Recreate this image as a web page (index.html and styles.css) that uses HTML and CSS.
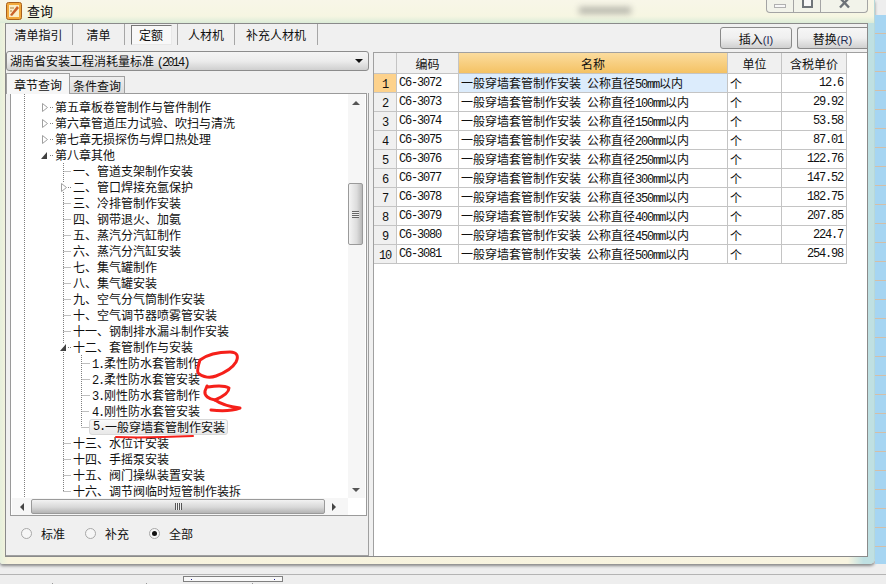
FILE: index.html
```html
<!DOCTYPE html>
<html lang="zh-CN">
<head>
    <meta charset="UTF-8">
    <title>查询</title>
    <link rel="stylesheet" href="styles.css">
</head>
<body>
    <div class="stage">
        <div class="top-area">
            <div class="window">
                <div class="titlebar">
                    <svg class="app-icon" width="16" height="18" viewBox="0 0 16 18">
                        <rect x="0.5" y="0.5" width="15" height="17" rx="2" fill="#f2a93b" stroke="#a8601c"/>
                        <rect x="3" y="3" width="10" height="12" fill="#fbeec8"/>
                        <path d="M4 13 L11 4 L13 6 L6 14 Z" fill="#c9602a"/>
                        <path d="M4 6 H8 M4 9 H6" stroke="#b08040"/>
                    </svg>
                    <span class="title-text">查询</span>
                    <div class="title-blur"></div>
                    <div class="win-controls">
                        <div class="win-btn min-btn"><span class="min-glyph"></span></div>
                        <div class="win-btn max-btn"><span class="max-glyph"></span></div>
                        <div class="win-btn close-btn">
                            <svg width="13" height="10" viewBox="0 0 13 10"><path d="M2 -1 L11 8.5 M11 -1 L2 8.5" stroke="#6d7278" stroke-width="2.4"/></svg>
                        </div>
                    </div>
                </div>

                <div class="client">
                    <div class="left-col">
                        <div class="tabs">
                            <div class="tab tab-1">清单指引</div>
                            <div class="tab tab-2">清单</div>
                            <div class="tab tab-3"><span class="tab-sunk">定额</span></div>
                            <div class="tab tab-4">人材机</div>
                            <div class="tab tab-5">补充人材机</div>
                        </div>

                        <div class="combo">
                            <span>湖南省安装工程消耗量标准 <span class="n">(2014)</span></span>
                            <span class="combo-arrow"></span>
                        </div>

                        <div class="subtabs">
                            <div class="subtab active">章节查询</div>
                            <div class="subtab">条件查询</div>
                        </div>

                        <div class="tree-panel">
                            <div class="tree-box">
                                <div class="tree-main">
                                    <div class="tree">
                                        <div class="row l1">第五章板卷管制作与管件制作</div>
                                        <div class="row l1">第六章管道压力试验、吹扫与清洗</div>
                                        <div class="row l1">第七章无损探伤与焊口热处理</div>
                                        <div class="row l1">第八章其他</div>
                                        <div class="row l2">一、管道支架制作安装</div>
                                        <div class="row l2">二、管口焊接充氩保护</div>
                                        <div class="row l2">三、冷排管制作安装</div>
                                        <div class="row l2">四、钢带退火、加氨</div>
                                        <div class="row l2">五、蒸汽分汽缸制作</div>
                                        <div class="row l2">六、蒸汽分汽缸安装</div>
                                        <div class="row l2">七、集气罐制作</div>
                                        <div class="row l2">八、集气罐安装</div>
                                        <div class="row l2">九、空气分气筒制作安装</div>
                                        <div class="row l2">十、空气调节器喷雾管安装</div>
                                        <div class="row l2">十一、钢制排水漏斗制作安装</div>
                                        <div class="row l2">十二、套管制作与安装</div>
                                        <div class="row l3"><span class="n">1.</span>柔性防水套管制作</div>
                                        <div class="row l3"><span class="n">2.</span>柔性防水套管安装</div>
                                        <div class="row l3"><span class="n">3.</span>刚性防水套管制作</div>
                                        <div class="row l3"><span class="n">4.</span>刚性防水套管安装</div>
                                        <div class="row l3"><div class="picked"><span class="n">5.</span>一般穿墙套管制作安装</div></div>
                                        <div class="row l2">十三、水位计安装</div>
                                        <div class="row l2">十四、手摇泵安装</div>
                                        <div class="row l2">十五、阀门操纵装置安装</div>
                                        <div class="row l2">十六、调节阀临时短管制作装拆</div>

                                        <!-- tree lines sit on top of the rows -->
                                        <svg class="tree-lines" width="337" height="404" viewBox="11 94 337 404">
                                            <g fill="none" stroke="#808080" stroke-dasharray="1 1">
                                                <path d="M24.5 94 V498"/>
                                                <path d="M63.5 163 V183 M63.5 192 V343 M63.5 352 V491"/>
                                                <path d="M63.5 171.5 H71 M63.5 203.5 H71 M63.5 219.5 H71 M63.5 235.5 H71 M63.5 251.5 H71 M63.5 267.5 H71 M63.5 283.5 H71 M63.5 299.5 H71 M63.5 315.5 H71 M63.5 331.5 H71 M63.5 443.5 H71 M63.5 459.5 H71 M63.5 475.5 H71 M63.5 491.5 H71"/>
                                                <path d="M81.5 355 V427"/>
                                                <path d="M81.5 363.5 H90 M81.5 379.5 H90 M81.5 395.5 H90 M81.5 411.5 H89 M81.5 427.5 H89"/>
                                                <path d="M50 107.5 H53 M50 123.5 H53 M50 139.5 H53 M50 155.5 H53 M68 187.5 H71 M68 347.5 H71"/>
                                            </g>
                                            <g fill="#fff" stroke="#a0a0a0">
                                                <path d="M42.5 103.5 L47.5 107.5 L42.5 111.5 Z"/>
                                                <path d="M42.5 119.5 L47.5 123.5 L42.5 127.5 Z"/>
                                                <path d="M42.5 135.5 L47.5 139.5 L42.5 143.5 Z"/>
                                                <path d="M61.5 183.5 L66.5 187.5 L61.5 191.5 Z"/>
                                            </g>
                                            <path d="M47 152 V159 H41 Z" fill="#404040"/>
                                            <path d="M66 344 V351 H60 Z" fill="#404040"/>
                                        </svg>
                                    </div>
                                    <div class="vscroll">
                                        <div class="arrow up"></div>
                                        <div class="vtrack">
                                            <div class="vthumb"><span class="vgrip"></span></div>
                                        </div>
                                        <div class="arrow down"></div>
                                    </div>
                                </div>
                                <div class="hscroll">
                                    <div class="arrow left"></div>
                                    <div class="hthumb"><span class="hgrip"></span></div>
                                    <div class="arrow right"></div>
                                </div>
                            </div>

                            <div class="radios">
                                <div class="radio"><span class="dot"></span>标准</div>
                                <div class="radio"><span class="dot"></span>补充</div>
                                <div class="radio"><span class="dot checked"></span>全部</div>
                            </div>
                        </div>
                    </div>

                    <div class="right-col">
                        <div class="toolbar">
                            <button class="btn">插入<span class="key">(I)</span></button>
                            <button class="btn btn-last">替换<span class="key">(R)</span></button>
                        </div>
                        <div class="grid-box">
                            <table class="grid">
                                <colgroup>
                                    <col class="c-no"><col class="c-code"><col class="c-name"><col class="c-unit"><col class="c-price">
                                </colgroup>
                                <thead>
                                    <tr><th></th><th>编码</th><th class="sorted">名称</th><th>单位</th><th>含税单价</th></tr>
                                </thead>
                                <tbody>
                                    <tr class="current"><td class="no"><span class="n">1</span></td><td class="n">C6-3072</td><td class="name">一般穿墙套管制作安装<span class="n">&nbsp;</span>公称直径<span class="n">50mm</span>以内</td><td>个</td><td class="n price">12.6</td></tr>
                                    <tr><td class="no"><span class="n">2</span></td><td class="n">C6-3073</td><td>一般穿墙套管制作安装<span class="n">&nbsp;</span>公称直径<span class="n">100mm</span>以内</td><td>个</td><td class="n price">29.92</td></tr>
                                    <tr><td class="no"><span class="n">3</span></td><td class="n">C6-3074</td><td>一般穿墙套管制作安装<span class="n">&nbsp;</span>公称直径<span class="n">150mm</span>以内</td><td>个</td><td class="n price">53.58</td></tr>
                                    <tr><td class="no"><span class="n">4</span></td><td class="n">C6-3075</td><td>一般穿墙套管制作安装<span class="n">&nbsp;</span>公称直径<span class="n">200mm</span>以内</td><td>个</td><td class="n price">87.01</td></tr>
                                    <tr><td class="no"><span class="n">5</span></td><td class="n">C6-3076</td><td>一般穿墙套管制作安装<span class="n">&nbsp;</span>公称直径<span class="n">250mm</span>以内</td><td>个</td><td class="n price">122.76</td></tr>
                                    <tr><td class="no"><span class="n">6</span></td><td class="n">C6-3077</td><td>一般穿墙套管制作安装<span class="n">&nbsp;</span>公称直径<span class="n">300mm</span>以内</td><td>个</td><td class="n price">147.52</td></tr>
                                    <tr><td class="no"><span class="n">7</span></td><td class="n">C6-3078</td><td>一般穿墙套管制作安装<span class="n">&nbsp;</span>公称直径<span class="n">350mm</span>以内</td><td>个</td><td class="n price">182.75</td></tr>
                                    <tr><td class="no"><span class="n">8</span></td><td class="n">C6-3079</td><td>一般穿墙套管制作安装<span class="n">&nbsp;</span>公称直径<span class="n">400mm</span>以内</td><td>个</td><td class="n price">207.85</td></tr>
                                    <tr><td class="no"><span class="n">9</span></td><td class="n">C6-3080</td><td>一般穿墙套管制作安装<span class="n">&nbsp;</span>公称直径<span class="n">450mm</span>以内</td><td>个</td><td class="n price">224.7</td></tr>
                                    <tr><td class="no"><span class="n">10</span></td><td class="n">C6-3081</td><td>一般穿墙套管制作安装<span class="n">&nbsp;</span>公称直径<span class="n">500mm</span>以内</td><td>个</td><td class="n price">254.98</td></tr>
                                </tbody>
                            </table>
                        </div>
                    </div>
                </div>
            </div>
            <div class="desk-strip"></div>
        </div>

        <div class="bottom-gap"></div>
        <div class="bottom-bar">
            <div class="bottom-box"><i class="box-dot"></i><i class="box-dot"></i></div>
        </div>

        <!-- red pen marks drawn on the screenshot -->
        <svg class="pen" width="886" height="584" viewBox="0 0 886 584">
            <g fill="none" stroke="#f5201a" stroke-width="3" stroke-linecap="round" stroke-linejoin="round">
                <path d="M200 360 C198 366 197 370 198 373 C203 378 211 378 216 376 C224 373 232 369 236 362 C239 356 237 352 230 352 C220 352 208 354 200 360"/>
                <path d="M208 387 C214 386 224 385 229 388 C229 393 222 397 215 400 C209 399 204 396 205 391 L207 386"/>
                <path d="M215 400 C222 405 232 407 240 408 C232 411 220 411 211 410"/>
                <path d="M116 437 C140 438 170 437 193 436" stroke-width="2"/>
            </g>
        </svg>
    </div>
</body>
</html>
```

FILE: styles.css
```css
* {
    box-sizing: border-box;
}
body {
    margin: 0;
    overflow: hidden;
    font-family: "Noto Sans CJK SC", "Liberation Sans", sans-serif;
    font-size: 12px;
    color: #101010;
}
/* half-width latin: 6px advance next to the 12px hanzi */
.n {
    font-family: "Liberation Mono", monospace;
    font-size: 12px;
    letter-spacing: -1.2px;
}
.key {
    font-family: "Liberation Sans", sans-serif;
    font-size: 11px;
    color: #1c2a50;
}
.stage {
    position: relative;
    width: 886px;
    height: 584px;
    display: flex;
    flex-direction: column;
    background: #eeeeee;
}
.top-area {
    display: flex;
    height: 564px;
}
.window {
    width: 875px;
    height: 564px;
    padding: 0 6px 7px 5px;
    border-radius: 0 0 5px 3px;
    border-right: 1px solid #b8d8d8;
    background: linear-gradient(90deg, #e6f0dc 0, #f7f3dd 8px, #f8f4e0 97%, #bfe0e2 98.8%);
    box-shadow: 0 2px 3px #888;
}
.desk-strip {
    flex: 1;
    margin-top: 15px;
    background: repeating-linear-gradient(180deg, #a6d5f2 0, #a6d5f2 18px, #d4bfa8 18px, #d4bfa8 19px);
}

/* title bar */
.titlebar {
    display: flex;
    align-items: center;
    height: 23px;
    background: linear-gradient(180deg, #f8f6e8 0%, #f6f6e2 70%, #dcecd8 100%);
    margin: 0 -6px 0 -5px;
    padding: 0 0 2px 6px;
}
.app-icon {
    flex: none;
}
.title-text {
    margin-left: 5px;
    font-size: 13px;
}
.title-blur {
    width: 52px;
    height: 7px;
    margin-left: 526px;
    background: #666;
    opacity: 0.45;
    filter: blur(3px);
}
.win-controls {
    display: flex;
    height: 14px;
    width: 102px;
    margin: -9px 0 0 135px;
    border: 1px solid #a4a4a4;
    border-top: 0;
    border-radius: 0 0 4px 4px;
    background: #f2f3ea;
}
.win-btn {
    display: flex;
    align-items: center;
    justify-content: center;
    border-right: 1px solid #a4a4a4;
}
.min-btn {
    width: 27px;
}
.max-btn {
    width: 27px;
}
.close-btn {
    flex: 1;
    border-right: 0;
    align-items: flex-start;
}
.min-glyph {
    width: 12px;
    height: 4px;
    margin-top: 1px;
    border: 1px solid #b0b0b0;
    background: #f8f8f8;
}
.max-glyph {
    width: 11px;
    height: 10px;
    margin-top: -5px;
    border: 2px solid #70757a;
    background: #f8f8f8;
}

/* client area */
.client {
    display: flex;
    height: 534px;
    border: 1px solid #8a8a8a;
    background: #f0f0f0;
}
.left-col {
    width: 367px;
    display: flex;
    flex-direction: column;
}
.tabs {
    display: flex;
    height: 21px;
    margin-left: -1px;
}
.tab {
    display: flex;
    align-items: center;
    justify-content: center;
    height: 21px;
    border-right: 1px solid #a6a6a6;
}
.tab-1 {
    width: 68px;
}
.tab-2 {
    width: 52px;
}
.tab-3 {
    width: 53px;
}
.tab-4 {
    width: 57px;
}
.tab-5 {
    width: 83px;
}
.tab-sunk {
    display: flex;
    align-items: center;
    justify-content: center;
    width: 41px;
    height: 20px;
    border: 1px solid;
    border-color: #777 #e8e8e8 #e8e8e8 #777;
    background: #f8f8f8;
}
.combo {
    display: flex;
    align-items: center;
    justify-content: space-between;
    width: 363px;
    height: 20px;
    margin-top: 6px;
    padding: 0 4px 0 3px;
    border: 1px solid #8c8c8c;
    border-radius: 3px;
    background: linear-gradient(180deg, #f4f4f4 0%, #ececec 50%, #cfcfcf 100%);
}
.combo .n {
    letter-spacing: -1.9px;
}
.combo-arrow {
    width: 0;
    height: 0;
    border: 4px solid transparent;
    border-top: 4px solid #111;
    border-bottom: 0;
    margin-right: 1px;
}
.subtabs {
    display: flex;
    align-items: flex-end;
    height: 21px;
    margin-top: 2px;
    position: relative;
    z-index: 1;
}
.subtab {
    display: flex;
    align-items: center;
    justify-content: center;
    width: 55px;
    height: 18px;
    border: 1px solid #a0a0a0;
    border-left: 0;
    border-bottom: 1px solid #a0a0a0;
    background: linear-gradient(180deg, #efefef, #dcdcdc);
}
.subtab.active {
    width: 64px;
    height: 21px;
    border-left: 1px solid #a0a0a0;
    border-bottom: 0;
    background: #f6f6f6;
}
.tree-panel {
    flex: 1;
    display: flex;
    flex-direction: column;
    width: 363px;
    margin-top: -1px;
    padding: 0 1px 3px 4px;
    border-right: 1px solid #a0a0a0;
    border-bottom: 1px solid #a0a0a0;
}
.tree-box {
    height: 423px;
    border: 1px solid #9a9a9a;
    background: #fff;
}
.tree-main {
    display: flex;
    height: 404px;
}
.tree {
    position: relative;
    width: 337px;
    height: 404px;
    padding-top: 5px;
    overflow: hidden;
}
.tree-lines {
    position: absolute;
    left: 0;
    top: 0;
}
.row {
    height: 16px;
    line-height: 16px;
    white-space: nowrap;
}
.l1 {
    padding-left: 44px;
}
.l2 {
    padding-left: 62px;
}
.l3 {
    padding-left: 81px;
}
.picked {
    display: flex;
    align-items: center;
    position: relative;
    z-index: 1;
    width: 139px;
    height: 16px;
    margin-left: -3px;
    padding-left: 3px;
    border: 1px solid #d8d8d8;
    border-radius: 3px;
    background: linear-gradient(180deg, #fbfbfb, #e8e8e8);
}

/* scrollbars */
.vscroll {
    width: 17px;
    display: flex;
    flex-direction: column;
    background: #f6f6f6;
}
.vtrack {
    flex: 1;
    padding-top: 72px;
}
.vthumb {
    display: flex;
    align-items: center;
    justify-content: center;
    width: 15px;
    height: 62px;
    border: 1px solid #9a9a9a;
    border-radius: 2px;
    background: linear-gradient(90deg, #f4f4f4, #dcdcdc 60%, #b8b8b8);
}
.vgrip {
    width: 7px;
    height: 7px;
    background: repeating-linear-gradient(180deg, #666 0, #666 1px, #eee 1px, #eee 2px);
}
.hscroll {
    display: flex;
    align-items: center;
    height: 17px;
    margin-left: 1px;
    width: 336px;
    background: #f6f6f6;
}
.hthumb {
    display: flex;
    align-items: center;
    justify-content: center;
    width: 294px;
    height: 15px;
    border: 1px solid #9a9a9a;
    border-radius: 2px;
    background: linear-gradient(180deg, #f2f2f2, #d8d8d8 55%, #b4b4b4);
}
.hgrip {
    width: 7px;
    height: 7px;
    background: repeating-linear-gradient(90deg, #555 0, #555 1px, #eee 1px, #eee 2px);
}
.arrow {
    flex: none;
    display: flex;
    align-items: center;
    justify-content: center;
}
.arrow::before {
    content: "";
    width: 0;
    height: 0;
    border: 4px solid transparent;
}
.arrow.up,
.arrow.down {
    width: 15px;
    height: 17px;
}
.arrow.left {
    width: 19px;
    height: 17px;
}
.arrow.right {
    width: 18px;
    height: 17px;
}
.arrow.up::before {
    border-top: 0;
    border-bottom-color: #555;
}
.arrow.down::before {
    border-bottom: 0;
    border-top-color: #555;
}
.arrow.left::before {
    border-left: 0;
    border-right-color: #444;
}
.arrow.right::before {
    border-right: 0;
    border-left-color: #444;
}

/* radios */
.radios {
    display: flex;
    align-items: center;
    gap: 20px;
    flex: 1;
    padding: 0 0 2px 11px;
}
.radio {
    display: flex;
    align-items: center;
    gap: 9px;
    width: 44px;
    white-space: nowrap;
}
.dot {
    position: relative;
    flex: none;
    width: 11px;
    height: 11px;
    border: 1px solid #a8a8a8;
    border-radius: 50%;
    background: #f6f6f6;
}
.dot.checked::after {
    content: "";
    position: absolute;
    left: 2px;
    top: 2px;
    width: 5px;
    height: 5px;
    border-radius: 50%;
    background: #111;
}

/* right side */
.right-col {
    flex: 1;
    display: flex;
    flex-direction: column;
}
.toolbar {
    display: flex;
    justify-content: flex-end;
    gap: 5px;
    height: 28px;
    padding-top: 3px;
}
.btn {
    width: 72px;
    height: 22px;
    padding: 0;
    border: 1px solid #8a8a8a;
    border-radius: 3px;
    color: #101010;
    font-family: inherit;
    font-size: 12px;
    background: linear-gradient(180deg, #f6f6f6 0%, #efefef 50%, #d0d0d0 100%);
}
.btn-last {
    width: 70px;
    border-right: 0;
    border-radius: 3px 0 0 3px;
}
.grid-box {
    flex: 1;
    border: 1px solid #a0a0a0;
    border-right: 0;
    border-bottom: 0;
    background: #fff;
}
.grid {
    table-layout: fixed;
    width: 473px;
    border-collapse: separate;
    border-spacing: 0;
}
.c-no {
    width: 23px;
}
.c-code {
    width: 62px;
}
.c-name {
    width: 269px;
}
.c-unit {
    width: 54px;
}
.c-price {
    width: 65px;
}
.grid th,
.grid td {
    height: 19px;
    padding: 0 2px;
    border-right: 1px solid #c4c4c4;
    border-bottom: 1px solid #c4c4c4;
    white-space: nowrap;
    overflow: hidden;
}
.grid th {
    height: 21px;
    font-weight: normal;
    background: #f0f0f0;
}
.grid th.sorted {
    background: linear-gradient(180deg, #fbdc9e, #f4c264);
}
.grid td.no {
    text-align: center;
    background: #f0f0f0;
}
.grid tr.current td.no {
    background: #fdd28c;
}
.grid td.name {
    background: #dcecfc;
}
.grid td.price {
    padding-right: 3px;
    text-align: right;
}

/* bottom of the screen */
.bottom-gap {
    height: 11px;
    border-bottom: 1px solid #b4b4b4;
}
.bottom-bar {
    flex: 1;
    padding: 1px 0 0 183px;
    background:
        linear-gradient(#999, #999) 52px 8px / 1px 1px no-repeat,
        linear-gradient(#999, #999) 146px 8px / 1px 1px no-repeat,
        linear-gradient(#999, #999) 252px 8px / 1px 1px no-repeat,
        #eeeeee;
}
.bottom-box {
    display: flex;
    align-items: center;
    justify-content: space-between;
    width: 100px;
    height: 6px;
    padding: 0 7px;
    border: 1px solid #808080;
    background: #f8f8f8;
}
.box-dot {
    width: 1px;
    height: 1px;
    background: #20208a;
}
.pen {
    position: absolute;
    left: 0;
    top: 0;
    pointer-events: none;
}
```
